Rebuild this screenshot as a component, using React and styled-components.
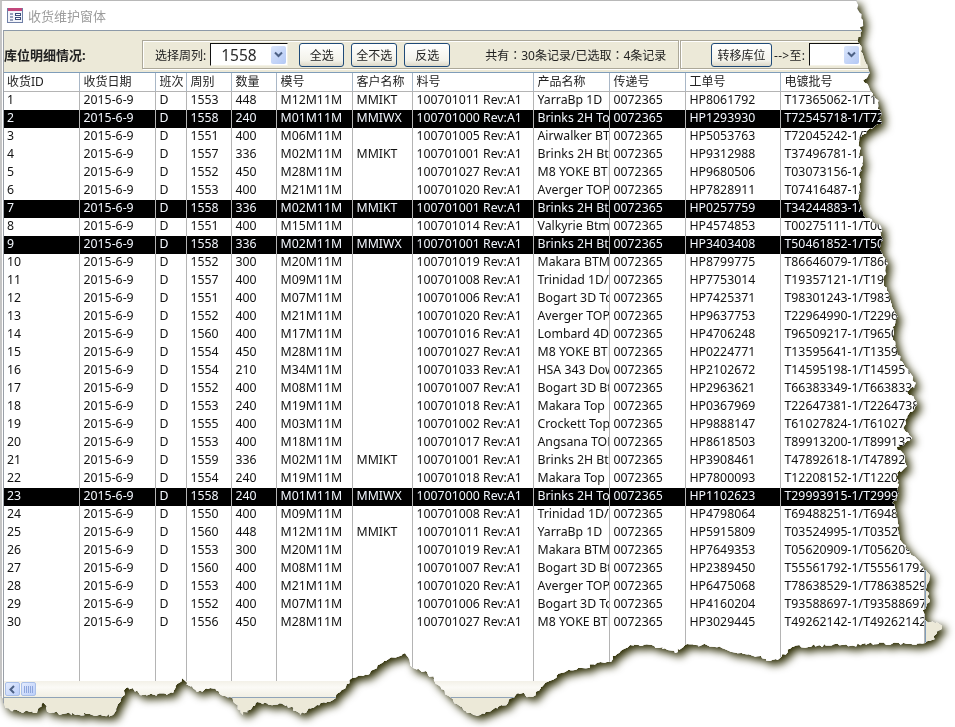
import React from 'react'
import styled, { createGlobalStyle } from 'styled-components'

const FONT = `"Noto Sans", "Noto Sans CJK SC", sans-serif`

const GlobalStyle = createGlobalStyle`
  html, body { margin: 0; padding: 0; background: #fff; overflow: hidden; }
  body { font-family: ${FONT}; color: #111; }
`

// outline of the torn paper, clockwise from the top right corner
const TEAR_POINTS = [
  [857, 0], [858, 10], [863, 20], [858, 40], [864, 58], [870, 73], [863, 80], [875, 97], [880, 110], [882, 123],
  [870, 128], [860, 137], [860, 150], [862, 163], [860, 175], [860, 187], [858, 200], [863, 215], [880, 225],
  [883, 240], [880, 250], [888, 263], [883, 280], [888, 292], [892, 307], [897, 317], [892, 327], [893, 340],
  [897, 352], [900, 360], [910, 373], [915, 385], [907, 393], [917, 403], [910, 412], [905, 420], [903, 428],
  [912, 438], [897, 447], [905, 457], [907, 467], [897, 473], [898, 487], [897, 497], [892, 503], [897, 517],
  [898, 530], [900, 540], [910, 553], [918, 560], [930, 575], [925, 590], [930, 600], [923, 610], [925, 620],
  [942, 625], [940, 630], [932, 640], [925, 643], [842, 645], [792, 647], [780, 658], [772, 660], [742, 653],
  [715, 647], [702, 645], [685, 645], [675, 653], [652, 645], [630, 645], [608, 662], [582, 668], [565, 672],
  [547, 682], [532, 697], [518, 693], [508, 703], [480, 715], [467, 713], [450, 697], [427, 672], [413, 668],
  [405, 653], [390, 658], [377, 668], [367, 675], [352, 678], [340, 692], [333, 700], [317, 705], [300, 715],
  [287, 705], [257, 702], [243, 715], [230, 697], [210, 688], [197, 692], [182, 678], [173, 693], [140, 695],
  [128, 687], [117, 707], [113, 715], [50, 713], [43, 702], [37, 713], [10, 710], [3, 703], [0, 690],
]

// adds small jagged steps between the hand-read points
const roughen = (points) => {
  let seed = 7
  const noise = () => {
    seed = (seed * 16807) % 2147483647
    return seed / 2147483647 - 0.5
  }
  const out = []
  points.forEach(([x, y], i) => {
    const [nx, ny] = points[i + 1] || [x, y]
    const steps = Math.max(1, Math.round(Math.hypot(nx - x, ny - y) / 2.5))
    for (let s = 0; s < steps; s++) {
      const t = s / steps
      const amp = s === 0 ? 0 : 3.5
      out.push(`${(x + (nx - x) * t + noise() * amp).toFixed(1)}px ${(y + (ny - y) * t + noise() * amp).toFixed(1)}px`)
    }
  })
  return `0px 0px, ${out.join(', ')}`
}

const TORN_EDGE = roughen(TEAR_POINTS)

const COLUMNS = [
  ['收货ID', 75], ['收货日期', 76], ['班次', 31], ['周别', 45], ['数量', 45], ['模号', 76],
  ['客户名称', 60], ['料号', 121], ['产品名称', 76], ['传递号', 76], ['工单号', 95], ['电镀批号', 144],
]

// week | qty | mold | customer | part | product | work order | plating batch | picked
const RAW_ROWS = `1553|448|M12|MMIKT|011|YarraBp 1D|8061792|17365062|
1558|240|M01|MMIWX|000|Brinks 2H Top|1293930|72545718|1
1551|400|M06||005|Airwalker BTM|5053763|72045242|
1557|336|M02|MMIKT|001|Brinks 2H Btm|9312988|37496781|
1552|450|M28||027|M8 YOKE BTM|9680506|03073156|
1553|400|M21||020|Averger TOP|7828911|07416487|
1558|336|M02|MMIKT|001|Brinks 2H Btm|0257759|34244883|1
1551|400|M15||014|Valkyrie Btm|4574853|00275111|
1558|336|M02|MMIWX|001|Brinks 2H Btm|3403408|50461852|1
1552|300|M20||019|Makara BTM|8799775|86646079|
1557|400|M09||008|Trinidad 1D/Top|7753014|19357121|
1551|400|M07||006|Bogart 3D Top|7425371|98301243|
1552|400|M21||020|Averger TOP|9637753|22964990|
1560|400|M17||016|Lombard 4D|4706248|96509217|
1554|450|M28||027|M8 YOKE BTM|0224771|13595641|
1554|210|M34||033|HSA 343 Down|2102672|14595198|
1552|400|M08||007|Bogart 3D Btm|2963621|66383349|
1553|240|M19||018|Makara Top|0367969|22647381|
1555|400|M03||002|Crockett Top|9888147|61027824|
1553|400|M18||017|Angsana TOP|8618503|89913200|
1559|336|M02|MMIKT|001|Brinks 2H Btm|3908461|47892618|
1554|240|M19||018|Makara Top|7800093|12208152|
1558|240|M01|MMIWX|000|Brinks 2H Top|1102623|29993915|1
1550|400|M09||008|Trinidad 1D/Top|4798064|69488251|
1560|448|M12|MMIKT|011|YarraBp 1D|5915809|03524995|
1553|300|M20||019|Makara BTM|7649353|05620909|
1560|400|M08||007|Bogart 3D Btm|2389450|55561792|
1553|400|M21||020|Averger TOP|6475068|78638529|
1552|400|M07||006|Bogart 3D Top|4160204|93588697|
1556|450|M28||027|M8 YOKE BTM|3029445|49262142|`

const ROWS = RAW_ROWS.split('\n').map((line, i) => {
  const [week, qty, mold, customer, part, product, order, batch, picked] = line.split('|')
  return {
    id: i + 1,
    picked: picked === '1',
    cells: [
      i + 1, '2015-6-9', 'D', week, qty, `${mold}M11M`, customer, `100701${part} Rev:A1`, product,
      '0072365', `HP${order}`, `T${batch}-1/T${batch}-30`,
    ],
  }
})

const Shadow = styled.div`
  width: 955px;
  height: 727px;
  filter: drop-shadow(0 0 0.6px #8a8a8a) drop-shadow(4px 4px 4px #2a2a00);
`

const Sheet = styled.div`
  width: 955px;
  height: 727px;
  box-sizing: border-box;
  display: flex;
  flex-direction: column;
  background: #fff;
  border-top: 1px solid #b8b8b8;
  border-left: 2px solid #c4c4c4;
  clip-path: polygon(${TORN_EDGE});
`

const TitleBar = styled.div`
  height: 29px;
  flex: none;
  display: flex;
  align-items: center;
  gap: 5px;
  padding-left: 5px;
  font-size: 13px;
  color: #9c9c9c;
`

const FormArea = styled.div`
  margin-left: 1px;
  flex: 1;
  display: flex;
  flex-direction: column;
  background: #ece9d8;
  border-top: 1px solid #8d9aa8;
  border-left: 1px solid #9aa0a8;
`

const Toolbar = styled.div`
  height: 41px;
  flex: none;
  box-sizing: border-box;
  display: flex;
  align-items: flex-start;
  padding-top: 9px;
  font-size: 12px;
`

const Heading = styled.div`
  width: 138px;
  height: 29px;
  display: flex;
  align-items: center;
  font-size: 13px;
  font-weight: 700;
  color: #222;
`

const Group = styled.div`
  height: 29px;
  box-sizing: border-box;
  display: flex;
  align-items: center;
  flex: ${(p) => (p.$grow ? 1 : 'none')};
  width: ${(p) => (p.$grow ? 'auto' : '537px')};
  padding-left: ${(p) => p.$inset}px;
  margin-left: ${(p) => (p.$grow ? 1 : 0)}px;
  border: 1px solid #aca899;
  box-shadow: inset 1px 1px 0 #fff, 1px 1px 0 #fff;
`

const Label = styled.span`
  margin-left: ${(p) => p.$before || 0}px;
  white-space: nowrap;
  color: #222;
`

// this label shows its full-width colons centred, as the TC forms do
const RecordCount = styled(Label)`
  font-family: "Noto Sans", "Noto Sans CJK TC", sans-serif;
`

const TargetLabel = styled(Label)`
  letter-spacing: 0.3px;
`

const Combo = styled.div`
  width: ${(p) => p.$width}px;
  height: 23px;
  box-sizing: border-box;
  margin-left: 4px;
  display: flex;
  align-items: center;
  justify-content: space-between;
  padding: 0 1px 0 10px;
  background: #fff;
  border-top: 1px solid #111;
  border-left: 1px solid #111;
  border-right: 1px solid #f4f2e6;
  border-bottom: 1px solid #f4f2e6;
  font-size: 15.5px;
  color: #2a2a2a;
`

const ComboArrow = styled.span`
  width: 15px;
  height: 18px;
  flex: none;
  display: flex;
  align-items: center;
  justify-content: center;
  background: linear-gradient(135deg, #dbe6fb, #b3c8f5);
  border-radius: 2px;
`

const Button = styled.button`
  width: ${(p) => p.$width}px;
  height: 24px;
  margin-left: ${(p) => p.$before}px;
  padding: 0;
  flex: none;
  background: linear-gradient(#ffffff, #f3f2ea 75%, #dcd8c8);
  border: 1px solid #1f4a78;
  border-radius: 3px;
  font-family: ${FONT};
  font-size: 12px;
  color: #222;
`

const GridWrap = styled.div`
  width: 921px;
  height: 608px;
  flex: none;
  background: #fff;
  border-top: 1px solid #7f9db9;
  border-right: 1px solid #7f9db9;
  overflow: hidden;
`

const Grid = styled.table`
  width: 920px;
  height: 608px;
  table-layout: fixed;
  border-collapse: collapse;
`

const HeadCell = styled.th`
  height: 17px;
  padding: 0 0 1px 4px;
  text-align: left;
  font-size: 12px;
  line-height: 16px;
  font-weight: 400;
  color: #222;
  white-space: nowrap;
  overflow: hidden;
  border-right: 1px solid #a9b7c6;
  border-bottom: 1px solid #b4b4b4;
  &:first-child { padding-left: 3px; }
`

const Row = styled.tr`
  height: 18px;
  background: ${(p) => (p.$picked ? '#000' : '#fff')};
  color: ${(p) => (p.$picked ? '#f4f8ff' : '#111')};
`

const Cell = styled.td`
  padding: 0 0 2px 4px;
  font-size: 12.3px;
  line-height: 16px;
  white-space: nowrap;
  overflow: hidden;
  border-right: 1px solid #b4b4b4;
  &:first-child { padding-left: 3px; }
`

const FillCell = styled.td`
  padding: 0;
  border-right: 1px solid #b4b4b4;
`

const ScrollBar = styled.div`
  width: 921px;
  height: 16px;
  flex: none;
  display: flex;
  align-items: center;
  gap: 1px;
  padding-left: 1px;
  box-sizing: border-box;
  background: linear-gradient(#f3f1e8, #fbfaf6 40%, #f1efe4);
`

const ScrollButton = styled.span`
  width: 15px;
  height: 14px;
  display: flex;
  align-items: center;
  justify-content: center;
  background: linear-gradient(135deg, #e3ebfd, #bccffa);
  border: 1px solid #a9bfe8;
  border-radius: 2px;
  box-sizing: border-box;
`

const FormFooter = styled.div`
  width: 921px;
  flex: 1;
  border-top: 1px solid #8fa3b8;
`

const Chevron = ({ down }) => (
  <svg width="9" height="9" viewBox="0 0 9 9">
    <path
      d={down ? 'M1 2.5 L4.5 6 L8 2.5' : 'M6 1 L2.5 4.5 L6 8'}
      fill="none"
      stroke="#4d6185"
      strokeWidth="2"
    />
  </svg>
)

const FormIcon = () => (
  <svg width="16" height="15" viewBox="0 0 16 15">
    <rect x="0.5" y="0.5" width="15" height="14" fill="#f2f4fa" stroke="#6f7fa6" />
    <rect x="1" y="0" width="14" height="3" fill="#c2477c" />
    <path d="M3 6 H6 M3 9 H6 M3 12 H6" stroke="#3d4f7c" />
    <rect x="8.5" y="5.5" width="5" height="2" fill="#fff" stroke="#3d4f7c" />
    <rect x="8.5" y="9.5" width="5" height="2" fill="#fff" stroke="#3d4f7c" />
  </svg>
)

const GripLines = () => (
  <svg width="9" height="7" viewBox="0 0 9 7">
    <path d="M0.5 0V7 M2.5 0V7 M4.5 0V7 M6.5 0V7 M8.5 0V7" stroke="#8ea6dc" />
  </svg>
)

export default function App() {
  return (
    <>
      <GlobalStyle />
      <Shadow>
        <Sheet>
          <TitleBar>
            <FormIcon />
            收货维护窗体
          </TitleBar>
          <FormArea>
            <Toolbar>
              <Heading>库位明细情况:</Heading>
              <Group $inset={12}>
                <Label>选择周列:</Label>
                <Combo $width={78}>
                  1558
                  <ComboArrow><Chevron down /></ComboArrow>
                </Combo>
                <Button $width={45} $before={11}>全选</Button>
                <Button $width={46} $before={7}>全不选</Button>
                <Button $width={46} $before={7}>反选</Button>
                <RecordCount $before={35}>共有：30条记录/已选取：4条记录</RecordCount>
              </Group>
              <Group $grow $inset={30}>
                <Button $width={61} $before={0}>转移库位</Button>
                <TargetLabel $before={2}>--&gt;至:</TargetLabel>
                <Combo $width={52}>
                  <span />
                  <ComboArrow><Chevron down /></ComboArrow>
                </Combo>
              </Group>
            </Toolbar>
            <GridWrap>
              <Grid>
                <colgroup>
                  {COLUMNS.map(([title, width]) => (
                    <col key={title} style={{ width }} />
                  ))}
                </colgroup>
                <thead>
                  <tr>
                    {COLUMNS.map(([title]) => (
                      <HeadCell key={title}>{title}</HeadCell>
                    ))}
                  </tr>
                </thead>
                <tbody>
                  {ROWS.map((row) => (
                    <Row key={row.id} $picked={row.picked}>
                      {row.cells.map((value, i) => (
                        <Cell key={i}>{value}</Cell>
                      ))}
                    </Row>
                  ))}
                  <tr>
                    {COLUMNS.map(([title]) => (
                      <FillCell key={title} />
                    ))}
                  </tr>
                </tbody>
              </Grid>
            </GridWrap>
            <ScrollBar>
              <ScrollButton><Chevron /></ScrollButton>
              <ScrollButton><GripLines /></ScrollButton>
            </ScrollBar>
            <FormFooter />
          </FormArea>
        </Sheet>
      </Shadow>
    </>
  )
}
